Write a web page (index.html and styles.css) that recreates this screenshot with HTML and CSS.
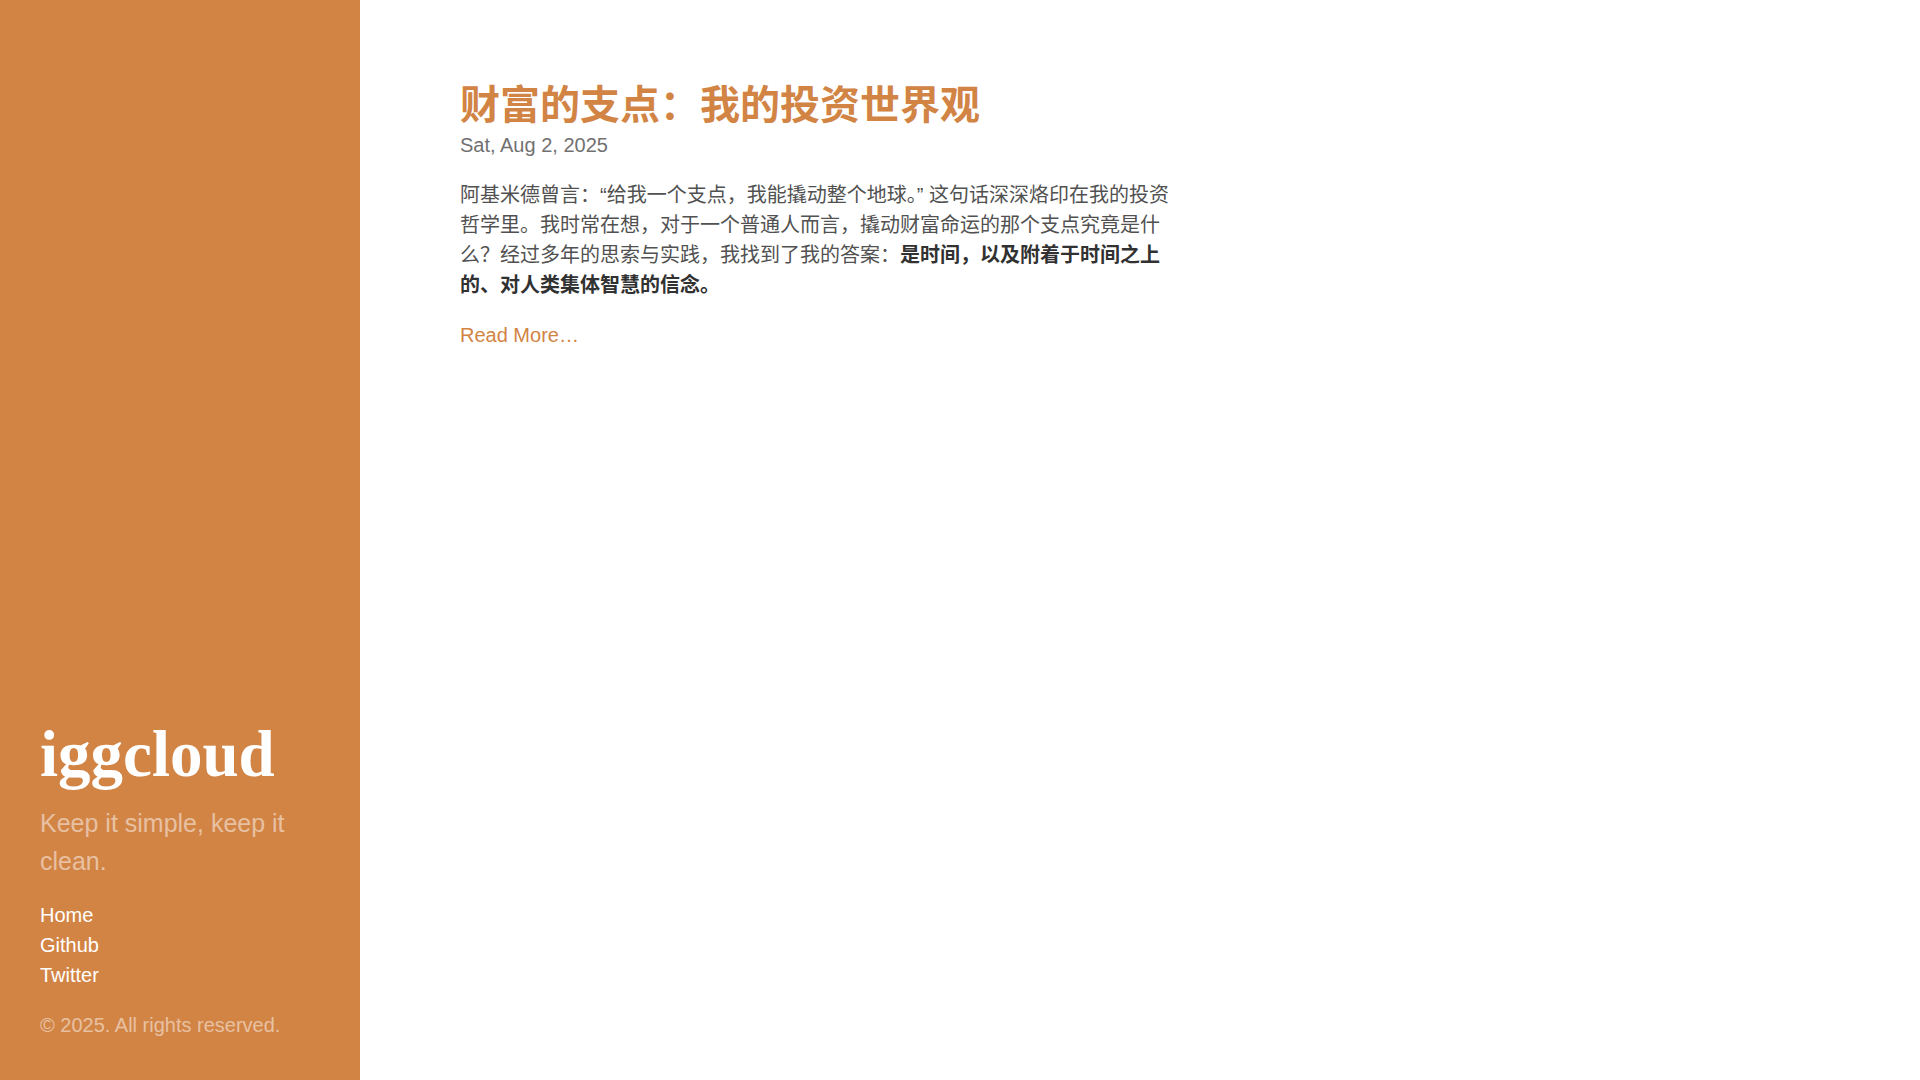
FILE: index.html
```html
<!DOCTYPE html>
<html lang="zh-CN">
<head>
<meta charset="utf-8">
<title>iggcloud</title>
<link rel="stylesheet" href="styles.css">
</head>
<body>
<div class="layout">
  <aside class="sidebar">
    <div class="sidebar-sticky">
      <div class="sidebar-about">
        <h1 class="site-title"><a href="#">iggcloud</a></h1>
        <p class="lead">Keep it simple, keep it clean.</p>
      </div>
      <nav class="sidebar-nav">
        <a class="sidebar-nav-item" href="#">Home</a>
        <a class="sidebar-nav-item" href="#">Github</a>
        <a class="sidebar-nav-item" href="#">Twitter</a>
      </nav>
      <p class="copyright">© 2025. All rights reserved.</p>
    </div>
  </aside>
  <main class="content">
    <article class="post">
      <h1 class="post-title"><a href="#">财富的支点：我的投资世界观</a></h1>
      <time class="post-date">Sat, Aug 2, 2025</time>
      <p>阿基米德曾言：“给我一个支点，我能撬动整个地球。” 这句话深深烙印在我的投资哲学里。我时常在想，对于一个普通人而言，撬动财富命运的那个支点究竟是什么？经过多年的思索与实践，我找到了我的答案：<strong>是时间，以及附着于时间之上的、对人类集体智慧的信念。</strong></p>
      <a class="read-more" href="#">Read More…</a>
    </article>
  </main>
</div>
</body>
</html>
```

FILE: styles.css
```css
html {
  font-size: 20px;
}
* {
  box-sizing: border-box;
}
body {
  margin: 0;
  font-family: "Liberation Sans", "Noto Sans CJK SC", Arial, sans-serif;
  font-size: 20px;
  line-height: 1.5;
  color: #515151;
  background: #fff;
}
a {
  text-decoration: none;
}
.layout {
  display: flex;
  min-height: 100vh;
}
.sidebar {
  flex: 0 0 360px;
  width: 360px;
  min-height: 100vh;
  background: #d28445;
  color: rgba(255, 255, 255, 0.5);
  padding: 32px 40px 20px 40px;
  display: flex;
  flex-direction: column;
  justify-content: flex-end;
}
.site-title {
  margin: 0 0 10px;
  font-family: "Liberation Serif", "Times New Roman", serif;
  font-weight: bold;
  font-size: 65px;
  line-height: 1.25;
}
.site-title a {
  color: #fff;
}
.lead {
  margin: 0 0 20px;
  font-size: 25px;
  line-height: 1.5;
}
.sidebar-nav {
  margin-bottom: 20px;
}
.sidebar-nav-item {
  display: block;
  color: #fff;
  line-height: 1.5;
}
.copyright {
  margin: 0 0 20px;
}
.content {
  flex: 0 1 760px;
  max-width: 760px;
  margin-left: 80px;
  padding: 80px 20px 80px 20px;
}
.post-title {
  margin: 0 0 10px;
  font-size: 40px;
  line-height: 1.25;
  font-weight: bold;
}
.post-title a {
  color: #d28445;
}
.post-date {
  display: block;
  margin-top: -10px;
  margin-bottom: 20px;
  color: #717171;
}
.post p {
  margin: 0 0 20px;
}
.post strong {
  color: #313131;
}
.read-more {
  color: #d28445;
}
```
